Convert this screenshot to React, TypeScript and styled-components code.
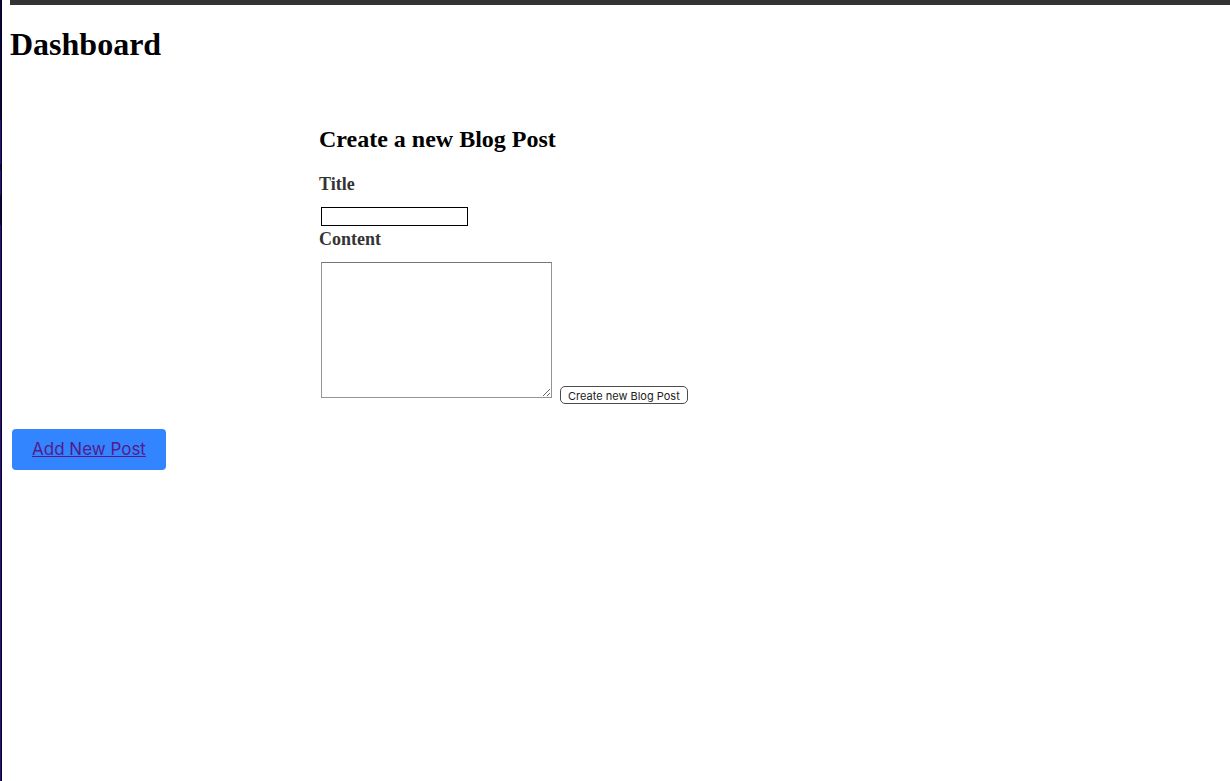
import React from "react";
import styled, { createGlobalStyle } from "styled-components";

const GlobalStyle = createGlobalStyle`
  *, *::before, *::after { box-sizing: border-box; }
  body {
    margin: 0;
    background: #fff;
    color: #000;
    font-family: "Liberation Serif", "Times New Roman", serif;
  }
`;

const Shell = styled.div`
  display: grid;
  grid-template-columns: 2px 1fr;
  min-height: 100vh;
`;

const WindowEdge = styled.div`
  border-right: 1px solid #07001c;
  background: linear-gradient(
    #0c0340 0 120px,
    #2d1180 120px 164px,
    #13063c 164px 170px,
    #2d1180 170px 195px,
    #0c0340 195px 225px,
    #2d1180 225px
  );
`;

const Page = styled.div`
  padding: 0 0 0 8px;
`;

const TopBar = styled.header`
  height: 5px;
  background: #333;
`;

const Main = styled.main`
  padding-right: 2px;
`;

const PageTitle = styled.h1`
  margin: 21px 0 0;
  font-size: 32px;
  line-height: 36px;
`;

const PostForm = styled.form`
  max-width: 600px;
  margin: 63px auto 0;
`;

const FormTitle = styled.h2`
  margin: 0 0 20px;
  font-size: 24px;
  line-height: 28px;
`;

const FieldLabel = styled.label`
  display: block;
  margin-bottom: 12px;
  color: #333;
  font-size: 18px;
  font-weight: bold;
  line-height: 22px;
`;

const TitleInput = styled.input`
  display: block;
  width: 147px;
  height: 19px;
  margin: 0 2px 2px;
  padding: 1px 2px;
  border: 1px solid #000;
  border-radius: 0;
  background: #fff;
  font: 11px Inter, "Liberation Sans", sans-serif;
`;

const ContentRow = styled.div`
  display: flex;
  align-items: flex-end;
  gap: 8px;
  padding-left: 2px;
`;

const ContentInput = styled.textarea`
  width: 231px;
  height: 136px;
  margin-bottom: 6px;
  padding: 2px;
  border: 1px solid #949494;
  border-top-color: #767676;
  border-radius: 0;
  background: #fff;
  font: 11px "Liberation Mono", monospace;
  resize: both;
`;

const SubmitButton = styled.button`
  height: 18px;
  padding: 2px 7px 0;
  border: 1px solid #4c4c4c;
  border-radius: 5px;
  background: #fff;
  color: #222;
  font: 11px/14px Inter, "Liberation Sans", sans-serif;
  white-space: nowrap;
`;

const AddPostLink = styled.a`
  display: inline-block;
  margin: 25px 2px 0;
  padding: 10px 20px;
  border-radius: 4px;
  background: #3385ff;
  color: #551a8b;
  font: 17px/21px Inter, "Liberation Sans", sans-serif;
  text-decoration: underline;
`;

export default function App() {
  return (
    <Shell>
      <GlobalStyle />
      <WindowEdge />
      <Page>
        <TopBar />
        <Main>
          <PageTitle>Dashboard</PageTitle>
          <PostForm onSubmit={(event) => event.preventDefault()}>
            <FormTitle>Create a new Blog Post</FormTitle>
            <FieldLabel htmlFor="title">Title</FieldLabel>
            <TitleInput id="title" name="title" type="text" />
            <FieldLabel htmlFor="content">Content</FieldLabel>
            <ContentRow>
              <ContentInput id="content" name="content" />
              <SubmitButton type="submit">Create new Blog Post</SubmitButton>
            </ContentRow>
          </PostForm>
          <AddPostLink href="#new-post">Add New Post</AddPostLink>
        </Main>
      </Page>
    </Shell>
  );
}
